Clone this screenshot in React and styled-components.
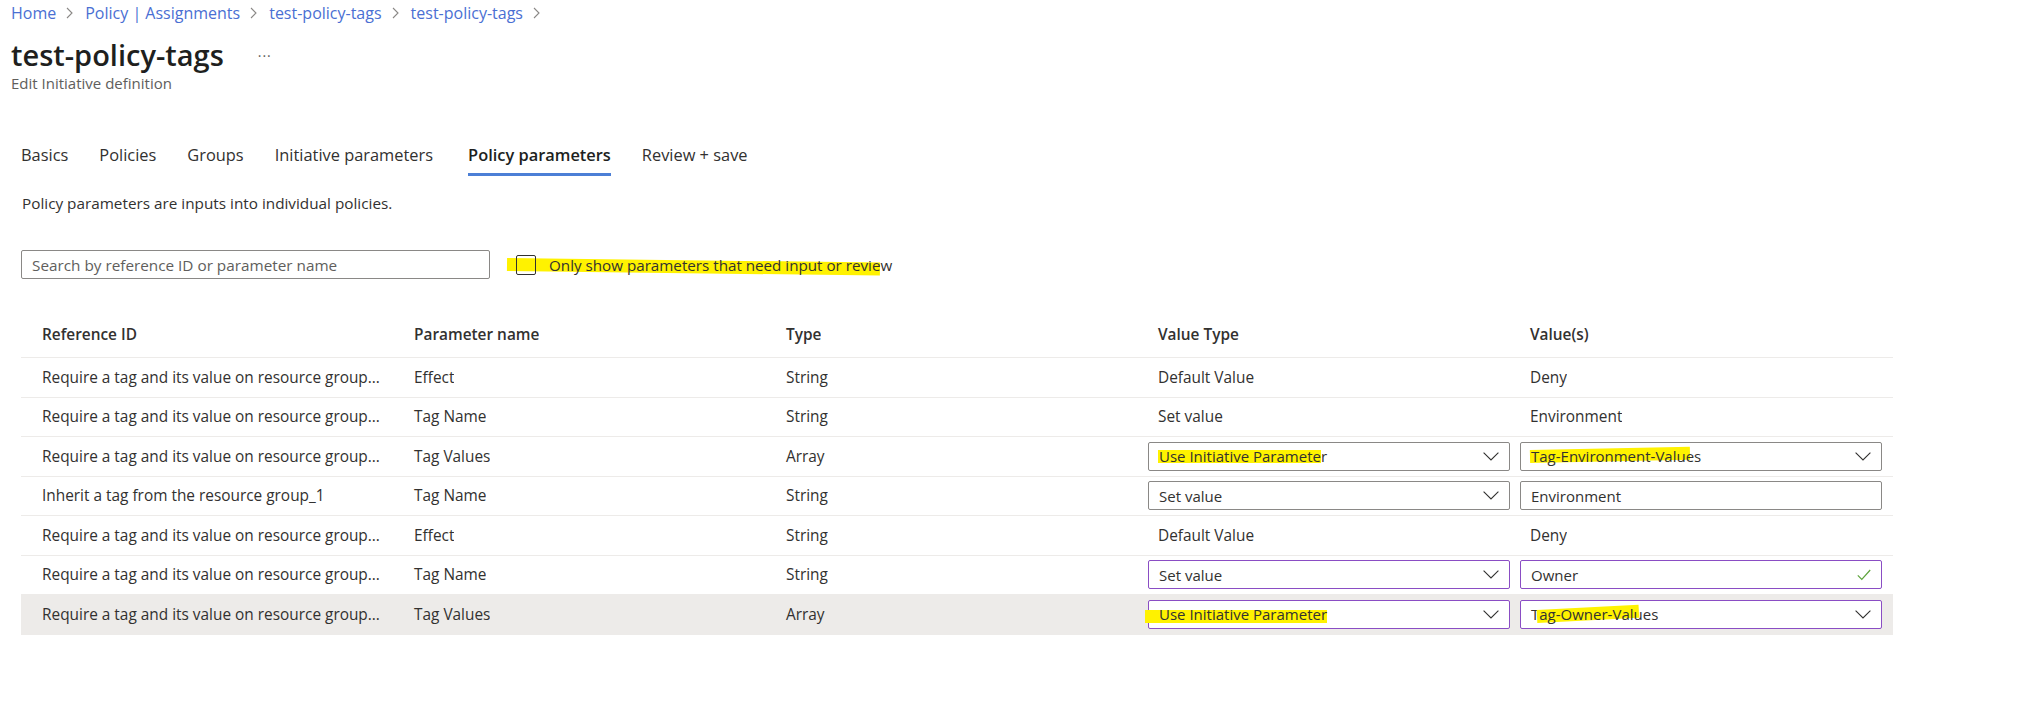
import React from "react";
import styled, { createGlobalStyle } from "styled-components";

const FONT = `"Segoe UI", "Open Sans", "Noto Sans", sans-serif`;

const Global = createGlobalStyle`
  html, body { margin: 0; padding: 0; background: #ffffff; }
  body { font-family: ${FONT}; color: #323130; -webkit-font-smoothing: antialiased; }
  * { box-sizing: border-box; }
`;

const Page = styled.div`
  width: 2036px;
  min-height: 719px;
  padding-top: 2px;
`;

const Header = styled.header`
  padding-left: 11px;
`;

const Breadcrumb = styled.nav`
  display: flex;
  align-items: center;
  height: 22px;
  font-size: 16px;
  line-height: 22px;
`;

const Crumb = styled.a`
  color: #4a6fd3;
  text-decoration: none;
`;

const CrumbSep = styled.span`
  display: inline-flex;
  align-items: center;
  margin: 0 12px 0 10px;
  color: #8a8886;
`;

const TitleRow = styled.div`
  display: flex;
  align-items: center;
  margin-top: 13px;
  height: 36px;
`;

const Title = styled.h1`
  margin: 0;
  font-size: 29px;
  line-height: 36px;
  font-weight: 600;
  color: #201f1e;
`;

const More = styled.span`
  margin-left: 34px;
  font-size: 14px;
  letter-spacing: 1px;
  color: #605e5c;
`;

const Subtitle = styled.div`
  margin-top: 0;
  font-size: 15px;
  line-height: 20px;
  color: #605e5c;
`;

const Tabs = styled.nav`
  display: flex;
  gap: 31px;
  margin-top: 50px;
  padding-left: 21px;
`;

const Tab = styled.div`
  font-size: 16.4px;
  line-height: 24px;
  padding-bottom: 6px;
  margin-left: ${(p) => (p.$active ? "4px" : "0")};
  border-bottom: 3px solid ${(p) => (p.$active ? "#4c7fd6" : "transparent")};
  font-weight: ${(p) => (p.$active ? 600 : 400)};
  color: ${(p) => (p.$active ? "#201f1e" : "#323130")};
`;

const Description = styled.p`
  margin: 17px 0 0 22px;
  font-size: 15.3px;
  line-height: 20px;
  color: #323130;
`;

const Toolbar = styled.div`
  display: flex;
  align-items: center;
  gap: 21px;
  margin: 37px 0 0 21px;
`;

const Search = styled.div`
  width: 469px;
  height: 29px;
  border: 1px solid #8a8886;
  border-radius: 2px;
  display: flex;
  align-items: center;
  padding-left: 10px;
  font-size: 15.3px;
  color: #605e5c;
`;

const FilterLabel = styled.label`
  display: flex;
  align-items: center;
  font-size: 15.2px;
  color: #323130;
`;

const Checkbox = styled.span`
  display: inline-block;
  width: 20px;
  height: 20px;
  border: 1px solid #323130;
  border-radius: 2px;
  margin: 0 13px 0 5px;
  vertical-align: middle;
`;

const Mark = styled.span`
  position: relative;
  z-index: 0;
  display: inline-flex;
  align-items: center;
  &::before {
    content: "";
    position: absolute;
    z-index: -1;
    left: ${(p) => p.$l ?? -1}px;
    right: ${(p) => p.$r ?? 0}px;
    top: ${(p) => p.$t ?? 4}px;
    bottom: ${(p) => p.$b ?? 4}px;
    background: #fff200;
    transform: rotate(${(p) => p.$rot ?? 0}deg);
    transform-origin: left center;
  }
`;

const Table = styled.div`
  margin: 33px 0 0 21px;
  width: 1872px;
`;

const Row = styled.div`
  display: grid;
  grid-template-columns: repeat(5, 372px);
  padding-left: 11px;
  height: ${(p) => (p.$head ? "46px" : "39.5px")};
  border-bottom: 1px solid ${(p) => (p.$last ? "transparent" : "#edebe9")};
  background: ${(p) => (p.$selected ? "#edebe9" : "transparent")};
`;

const Cell = styled.div`
  display: flex;
  align-items: center;
  padding-right: 10px;
  min-width: 0;
`;

const CellText = styled.span`
  padding-left: 10px;
  font-size: 15.4px;
  font-weight: ${(p) => (p.$head ? 600 : 400)};
  color: #323130;
  white-space: nowrap;
  overflow: hidden;
  text-overflow: ellipsis;
`;

const Field = styled.div`
  width: 100%;
  height: 29px;
  border: 1px solid ${(p) => (p.$dirty ? "#8a4dc4" : "#8a8886")};
  border-radius: 2px;
  background: #ffffff;
  display: flex;
  align-items: center;
  justify-content: space-between;
  padding: 0 10px 0 10px;
  font-size: 15px;
  color: #323130;
  white-space: nowrap;
`;

const FieldValue = styled.span`
  display: inline-flex;
  align-items: center;
`;

const Chevron = () => (
  <svg width="16" height="9" viewBox="0 0 16 9" fill="none">
    <path d="M0.6 0.6 L8 8 L15.4 0.6" stroke="#323130" strokeWidth="1.1" />
  </svg>
);

const Check = () => (
  <svg width="14" height="12" viewBox="0 0 14 12" fill="none">
    <path d="M0.8 6.4 L4.8 10.4 L13.2 1" stroke="#5ea33c" strokeWidth="1.2" />
  </svg>
);

const CrumbChevron = () => (
  <svg width="7" height="12" viewBox="0 0 7 12" fill="none">
    <path d="M1 1 L6 6 L1 11" stroke="#8a8886" strokeWidth="1.1" />
  </svg>
);

const REQ = "Require a tag and its value on resource group...";

const rows = [
  { ref: REQ, name: "Effect", type: "String", vt: { text: "Default Value" }, val: { text: "Deny" } },
  { ref: REQ, name: "Tag Name", type: "String", vt: { text: "Set value" }, val: { text: "Environment" } },
  {
    ref: REQ,
    name: "Tag Values",
    type: "Array",
    vt: {
      select: true,
      content: (
        <>
          <Mark $t={4} $b={3}>Use Initiative Paramete</Mark>r
        </>
      ),
    },
    val: {
      select: true,
      content: (
        <>
          <Mark $t={4} $b={3} $r={4} $rot={-1.2}>Tag-Environment-Value</Mark>s
        </>
      ),
    },
  },
  {
    ref: "Inherit a tag from the resource group_1",
    name: "Tag Name",
    type: "String",
    vt: { select: true, content: "Set value" },
    val: { input: true, content: "Environment" },
  },
  { ref: REQ, name: "Effect", type: "String", vt: { text: "Default Value" }, val: { text: "Deny" } },
  {
    ref: REQ,
    name: "Tag Name",
    type: "String",
    vt: { select: true, dirty: true, content: "Set value" },
    val: { input: true, dirty: true, check: true, content: "Owner" },
  },
  {
    ref: REQ,
    name: "Tag Values",
    type: "Array",
    selected: true,
    vt: {
      select: true,
      dirty: true,
      content: (
        <Mark $l={-14} $t={6} $b={1}>Use Initiative Parameter</Mark>
      ),
    },
    val: {
      select: true,
      dirty: true,
      content: (
        <>
          T<Mark $l={-2} $r={3} $t={6} $b={1} $rot={-3}>ag-Owner-Valu</Mark>es
        </>
      ),
    },
  },
];

const ValueCell = ({ spec }) => {
  if (spec.text) {
    return (
      <Cell>
        <CellText>{spec.text}</CellText>
      </Cell>
    );
  }
  return (
    <Cell>
      <Field $dirty={spec.dirty}>
        <FieldValue>{spec.content}</FieldValue>
        {spec.select && <Chevron />}
        {spec.check && <Check />}
      </Field>
    </Cell>
  );
};

const tabs = ["Basics", "Policies", "Groups", "Initiative parameters", "Policy parameters", "Review + save"];
const crumbs = ["Home", "Policy | Assignments", "test-policy-tags", "test-policy-tags"];
const heads = ["Reference ID", "Parameter name", "Type", "Value Type", "Value(s)"];

export default function App() {
  return (
    <Page>
      <Global />
      <Header>
        <Breadcrumb>
          {crumbs.map((c, i) => (
            <React.Fragment key={i}>
              <Crumb href="#">{c}</Crumb>
              <CrumbSep>
                <CrumbChevron />
              </CrumbSep>
            </React.Fragment>
          ))}
        </Breadcrumb>
        <TitleRow>
          <Title>test-policy-tags</Title>
          <More>···</More>
        </TitleRow>
        <Subtitle>Edit Initiative definition</Subtitle>
      </Header>

      <Tabs>
        {tabs.map((t) => (
          <Tab key={t} $active={t === "Policy parameters"}>
            {t}
          </Tab>
        ))}
      </Tabs>

      <Description>Policy parameters are inputs into individual policies.</Description>

      <Toolbar>
        <Search>Search by reference ID or parameter name</Search>
        <FilterLabel>
          <Mark $l={-4} $t={3} $b={4} $rot={0.7}>
            <Checkbox />
            Only show parameters that need input or revie
          </Mark>
          w
        </FilterLabel>
      </Toolbar>

      <Table>
        <Row $head>
          {heads.map((h) => (
            <Cell key={h}>
              <CellText $head>{h}</CellText>
            </Cell>
          ))}
        </Row>
        {rows.map((r, i) => (
          <Row key={i} $selected={r.selected} $last={i === rows.length - 1}>
            <Cell>
              <CellText>{r.ref}</CellText>
            </Cell>
            <Cell>
              <CellText>{r.name}</CellText>
            </Cell>
            <Cell>
              <CellText>{r.type}</CellText>
            </Cell>
            <ValueCell spec={r.vt} />
            <ValueCell spec={r.val} />
          </Row>
        ))}
      </Table>
    </Page>
  );
}
